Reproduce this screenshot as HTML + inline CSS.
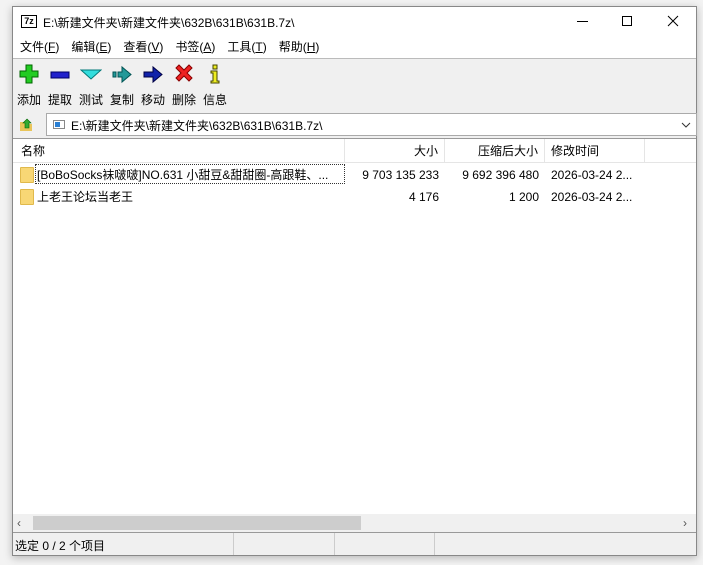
<!DOCTYPE html>
<html><head><meta charset="utf-8"><style>
*{margin:0;padding:0;box-sizing:border-box}
body{width:703px;height:565px;background:#f3f3f3;font-family:"Liberation Sans","Noto Sans CJK SC",sans-serif;font-size:12px;color:#000;position:relative;overflow:hidden}
.win{position:absolute;left:12px;top:6px;width:685px;height:550px;background:#fff;border:1px solid #888;box-shadow:0 2px 8px rgba(0,0,0,.25)}
.abs{position:absolute}
.title{left:0;top:0;width:683px;height:30px;background:#fff}
.menu{left:0;top:30px;width:683px;height:22px;background:#fff;border-bottom:1px solid #bbb}
.menu span{margin-left:7px;margin-right:5px;line-height:20px}
.tb{left:0;top:52px;width:683px;height:52px;background:#f0f0f0}
.btn{position:absolute;top:4px;width:30px;text-align:center}
.btn .lb{position:absolute;top:28px;left:-3px;width:36px;text-align:center;font-size:12px}
.addr{left:0;top:104px;width:683px;height:27px;background:#f0f0f0}
.list{left:0;top:131px;width:683px;height:376px;background:#fff;border-top:1px solid #999}
.hdr{height:24px;border-bottom:1px solid #e5e5e5;position:relative}
.hdr div{position:absolute;top:0;line-height:24px;border-right:1px solid #e5e5e5;height:24px;padding:0 6px}
.row{position:absolute;left:0;height:22px;line-height:22px;width:640px}
.row span{position:absolute}
.fold{position:absolute;left:7px;top:3px;width:14px;height:16px;background:#f8d775;border:1px solid #e0b94c;border-radius:1px}
.sb{left:0;top:507px;width:683px;height:18px;background:#f0f0f0}
.st{left:0;top:525px;width:683px;height:23px;background:#f0f0f0;border-top:1px solid #999}
</style></head><body>
<div class="win">
 <div class="abs title">
  <div class="abs" style="left:8px;top:8px;width:16px;height:13px;border:1px solid #000;font:bold 9px 'Liberation Sans';text-align:center;line-height:11px;background:#fff">7z</div>
  <div class="abs" style="left:30px;top:7px;font-size:12px">E:\新建文件夹\新建文件夹\632B\631B\631B.7z\</div>
  <div class="abs" style="left:564px;top:14px;width:11px;height:1px;background:#000"></div>
  <div class="abs" style="left:609px;top:9px;width:10px;height:10px;border:1px solid #000"></div>
  <svg class="abs" style="left:654px;top:8px" width="12" height="12"><path d="M1 1L11 11M11 1L1 11" stroke="#000" stroke-width="1"/></svg>
 </div>
 <div class="abs menu"><span>文件(<u>F</u>)</span><span>编辑(<u>E</u>)</span><span>查看(<u>V</u>)</span><span>书签(<u>A</u>)</span><span>工具(<u>T</u>)</span><span>帮助(<u>H</u>)</span></div>
 <div class="abs tb">
  <div class="btn" style="left:1px"><svg width="22" height="22"><path d="M8 2h6v6h6v6h-6v6h-6v-6h-6v-6h6z" fill="#2c2" stroke="#060" stroke-width="1"/></svg><div class="lb">添加</div></div>
  <div class="btn" style="left:32px"><svg width="22" height="22"><rect x="2" y="9" width="18" height="6" fill="#22c" stroke="#006"/></svg><div class="lb">提取</div></div>
  <div class="btn" style="left:63px"><svg width="22" height="22"><path d="M1 7h20l-10 9z" fill="#3dd" stroke="#077"/></svg><div class="lb">测试</div></div>
  <div class="btn" style="left:94px"><svg width="22" height="22"><path d="M2 9h3v5h-3zM7 9h4v-5l9 7.5-9 7.5v-5h-4z" fill="#299" stroke="#055"/></svg><div class="lb">复制</div></div>
  <div class="btn" style="left:125px"><svg width="22" height="22"><path d="M2 9h9v-5l9 7.5-9 7.5v-5h-9z" fill="#12a" stroke="#004"/></svg><div class="lb">移动</div></div>
  <div class="btn" style="left:156px"><svg width="22" height="22"><path d="M3 5l3-3 5 5 5-5 3 3-5 5 5 5-3 3-5-5-5 5-3-3 5-5z" fill="#e22" stroke="#800"/></svg><div class="lb">删除</div></div>
  <div class="btn" style="left:187px"><svg width="22" height="22"><rect x="9" y="2" width="4" height="4" fill="#ee2" stroke="#440"/><path d="M7 8h6v10h2v2h-8v-2h2v-8h-2z" fill="#ee2" stroke="#440"/></svg><div class="lb">信息</div></div>
 </div>
 <div class="abs addr">
  <svg class="abs" style="left:5px;top:5px" width="16" height="16"><path d="M2 6h4l1 2h7v7h-12z" fill="#e9c55a"/><path d="M9 3l4 4h-2v5h-4v-5h-2z" fill="#3a3" stroke="#060" stroke-width=".6"/></svg>
  <div class="abs" style="left:33px;top:2px;width:651px;height:23px;background:#fff;border:1px solid #aaa">
   <div class="abs" style="left:6px;top:6px;width:12px;height:9px;border:1px solid #888;background:#fff"><div style="margin:1px;width:5px;height:5px;background:#2a7fd4"></div></div>
   <div class="abs" style="left:24px;top:3px">E:\新建文件夹\新建文件夹\632B\631B\631B.7z\</div>
   <svg class="abs" style="left:634px;top:7px" width="10" height="8"><path d="M1 2l4 4 4-4" stroke="#333" fill="none"/></svg>
  </div>
 </div>
 <div class="abs list">
  <div class="hdr">
   <div style="left:0;width:332px;padding-left:8px">名称</div>
   <div style="left:332px;width:100px;text-align:right">大小</div>
   <div style="left:432px;width:100px;text-align:right">压缩后大小</div>
   <div style="left:532px;width:100px">修改时间</div>
  </div>
  <div class="row" style="top:25px"><div class="fold"></div><span style="left:22px;top:0;width:310px;height:20px;line-height:20px;border:1px dotted #333;padding-left:1px;white-space:nowrap;overflow:hidden">[BoBoSocks袜啵啵]NO.631 小甜豆&amp;甜甜圈-高跟鞋、...</span><span style="right:214px">9 703 135 233</span><span style="right:114px">9 692 396 480</span><span style="left:538px">2026-03-24 2...</span></div>
  <div class="row" style="top:47px"><div class="fold"></div><span style="left:24px">上老王论坛当老王</span><span style="right:214px">4 176</span><span style="right:114px">1 200</span><span style="left:538px">2026-03-24 2...</span></div>
 </div>
 <div class="abs sb">
  <div class="abs" style="left:4px;top:2px;font-size:12px;color:#555">‹</div>
  <div class="abs" style="left:20px;top:2px;width:328px;height:14px;background:#cdcdcd"></div>
  <div class="abs" style="left:670px;top:2px;font-size:12px;color:#555">›</div>
 </div>
 <div class="abs st">
  <div class="abs" style="left:2px;top:4px">选定 0 / 2 个项目</div>
  <div class="abs" style="left:220px;top:0;width:1px;height:22px;background:#ccc"></div>
  <div class="abs" style="left:321px;top:0;width:1px;height:22px;background:#ccc"></div>
  <div class="abs" style="left:421px;top:0;width:1px;height:22px;background:#ccc"></div>
 </div>
</div>
</body></html>
